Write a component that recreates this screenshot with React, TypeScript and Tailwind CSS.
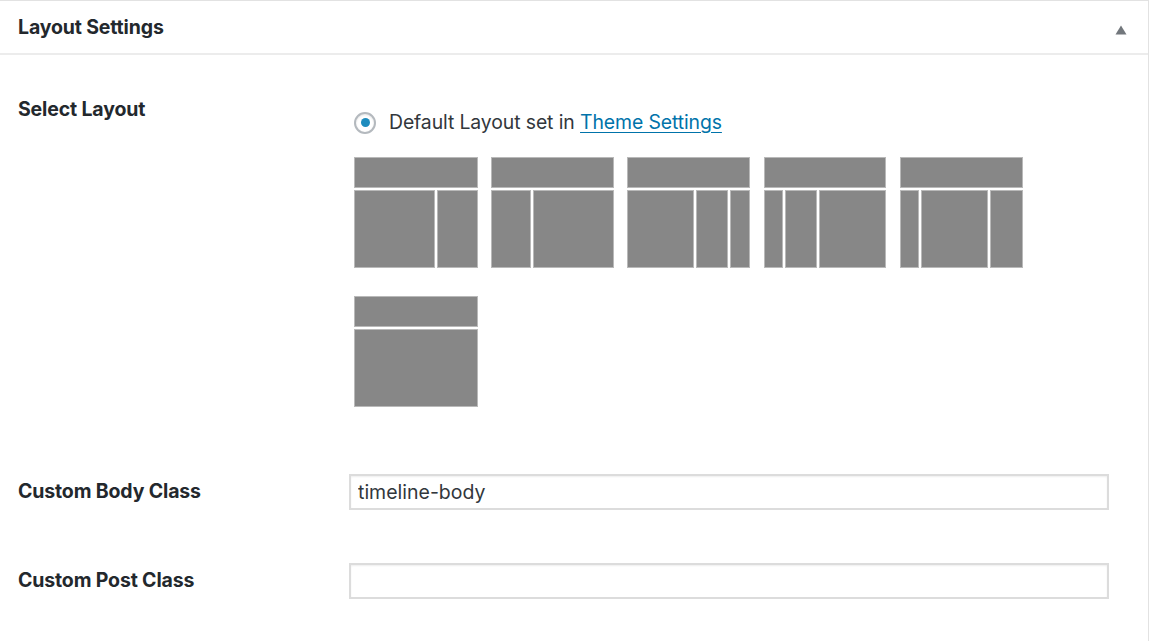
import React from "react";

const font = { fontFamily: 'Inter, "Liberation Sans", Arial, sans-serif' };

// column widths for each layout thumbnail (px)
const layouts: number[][] = [
  [81, 41],
  [40, 81],
  [67, 32, 20],
  [19, 32, 67],
  [19, 67, 33],
  [124],
];

function Block({ w, h }: { w?: number; h: number }) {
  return (
    <div
      className="bg-[#878787] border border-[#b9b9b9] shrink-0"
      style={{ width: w, height: h }}
    />
  );
}

function LayoutThumb({ cols }: { cols: number[] }) {
  const total = cols.reduce((a, b) => a + b, 0) + (cols.length - 1) * 2;
  return (
    <button className="flex flex-col gap-[2px] w-[124px] h-[111px] shrink-0">
      <Block w={total} h={31} />
      <div className="flex gap-[2px]">
        {cols.map((c, i) => (
          <Block key={i} w={c} h={78} />
        ))}
      </div>
    </button>
  );
}

export default function App() {
  return (
    <div className="w-[1151px] h-[641px] bg-white overflow-hidden" style={font}>
      <div className="w-[1149px] h-full border-t border-r border-[#e2e2e2]">
        {/* Header */}
        <div className="h-[54px] border-b-2 border-[#ececec] flex items-center justify-between pl-[18px] pr-[21px]">
          <h2 className="text-[19.5px] font-bold text-[#23282d] tracking-[-0.15px] pt-[1px]">Layout Settings</h2>
          <svg width="12" height="10" viewBox="0 0 12 10" className="mt-[5px]">
            <path d="M6 0.5L11.5 9.5H0.5Z" fill="#72777c" />
          </svg>
        </div>

        {/* Body */}
        <div className="pl-[18px] pt-[40px]">
          <div className="flex">
            <div className="w-[331px] shrink-0 text-[19.5px] font-bold text-[#23282d] tracking-[-0.15px]">Select Layout</div>
            <div className="pl-[5px] pt-[13px]">
              <label className="flex items-center gap-[13px] text-[19.4px] text-[#32373c] tracking-[-0.1px]">
                <span className="w-[22px] h-[22px] rounded-full border-2 border-[#b4b9be] flex items-center justify-center shadow-[inset_0_1px_2px_rgba(0,0,0,0.1)]">
                  <span className="w-[9px] h-[9px] rounded-full bg-[#1e8cbe]" />
                </span>
                <span>
                  Default Layout set in{" "}
                  <a href="#" className="text-[#0073aa] underline underline-offset-[3px]">Theme Settings</a>
                </span>
              </label>
              <div className="flex flex-wrap gap-x-[12.5px] gap-y-[28px] w-[680px] mt-[20px]">
                {layouts.map((cols, i) => (
                  <LayoutThumb key={i} cols={cols} />
                ))}
              </div>
            </div>
          </div>

          <div className="flex items-center mt-[67px]">
            <div className="w-[331px] shrink-0 text-[19.5px] font-bold text-[#23282d] tracking-[-0.15px]">Custom Body Class</div>
            <input
              defaultValue="timeline-body"
              className="w-[760px] h-[36px] border-2 border-[#dcdcdc] px-[7px] text-[19.5px] text-[#32373c] outline-none shadow-[inset_0_1px_2px_rgba(0,0,0,0.07)]"
              style={font}
            />
          </div>

          <div className="flex items-center mt-[53px]">
            <div className="w-[331px] shrink-0 text-[19.5px] font-bold text-[#23282d] tracking-[-0.15px]">Custom Post Class</div>
            <input
              className="w-[760px] h-[36px] border-2 border-[#dcdcdc] px-[7px] text-[19.5px] text-[#32373c] outline-none shadow-[inset_0_1px_2px_rgba(0,0,0,0.07)]"
              style={font}
            />
          </div>
        </div>
      </div>
    </div>
  );
}
